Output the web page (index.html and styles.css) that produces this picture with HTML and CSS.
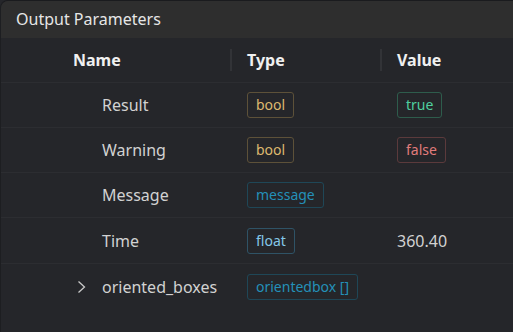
FILE: index.html
```html
<!DOCTYPE html>
<html lang="en">
<head>
<meta charset="utf-8">
<title>Output Parameters</title>
<link rel="stylesheet" href="styles.css">
</head>
<body>
<div class="panel">
  <div class="panel-title">Output Parameters</div>
  <div class="table">
    <div class="row head">
      <div class="cell name-h">Name</div>
      <div class="cell col-h"><span class="divider"></span>Type</div>
      <div class="cell col-h"><span class="divider"></span>Value</div>
    </div>
    <div class="row">
      <div class="cell name"><span class="chev-slot"></span>Result</div>
      <div class="cell type"><span class="badge b-bool">bool</span></div>
      <div class="cell value"><span class="badge v-true">true</span></div>
    </div>
    <div class="row">
      <div class="cell name"><span class="chev-slot"></span>Warning</div>
      <div class="cell type"><span class="badge b-bool">bool</span></div>
      <div class="cell value"><span class="badge v-false">false</span></div>
    </div>
    <div class="row">
      <div class="cell name"><span class="chev-slot"></span>Message</div>
      <div class="cell type"><span class="badge b-msg">message</span></div>
      <div class="cell value"></div>
    </div>
    <div class="row tall">
      <div class="cell name"><span class="chev-slot"></span>Time</div>
      <div class="cell type"><span class="badge b-float">float</span></div>
      <div class="cell value">360.40</div>
    </div>
    <div class="row last">
      <div class="cell name"><span class="chev-slot"><svg class="chev" width="9" height="14" viewBox="0 0 9 14"><path d="M1.5 1.5 L7.5 7 L1.5 12.5" fill="none" stroke="#c9c9c9" stroke-width="1.3"/></svg></span>oriented_boxes</div>
      <div class="cell type"><span class="badge b-msg">orientedbox []</span></div>
      <div class="cell value"></div>
    </div>
  </div>
</div>
</body>
</html>
```
FILE: styles.css
```css
html, body {
  margin: 0;
  padding: 0;
  background: #25262a;
  height: 332px;
  overflow: hidden;
}
body {
  font-family: "Noto Sans", "Open Sans", sans-serif;
  color: #d2d2d2;
}
.panel {
  height: 332px;
  box-sizing: border-box;
  border-top: 1px solid #1a1b1e;
  border-left: 1px solid #1d1e21;
  border-top-left-radius: 8px;
  background: #25262a;
  overflow: hidden;
}
.panel-title {
  height: 37px;
  background: #2e2e2e;
  padding-left: 15px;
  font-size: 16px;
  line-height: 37px;
  color: #e6e6e6;
}
.table {
  display: flex;
  flex-direction: column;
}
.row {
  display: grid;
  grid-template-columns: 229px 150px 1fr;
  height: 45px;
  border-bottom: 1px solid #2c2d31;
  box-sizing: border-box;
  align-items: center;
}
.row.tall {
  height: 46px;
}
.row.last {
  border-bottom: none;
}
.cell {
  display: flex;
  align-items: center;
  font-size: 16px;
}
.name-h {
  padding-left: 72px;
  font-weight: 700;
  color: #f0f0f0;
}
.col-h {
  font-weight: 700;
  color: #f0f0f0;
}
.divider {
  width: 2px;
  height: 22px;
  background: #323337;
  margin-right: 15px;
}
.name {
  padding-left: 76px;
}
.chev-slot {
  width: 25px;
  display: flex;
  align-items: center;
}
.chev {
  display: block;
}
.type, .value {
  padding-left: 17px;
}
.badge {
  display: inline-block;
  height: 26px;
  box-sizing: border-box;
  padding: 0 8px;
  border: 1px solid;
  border-radius: 3px;
  font-size: 14px;
  line-height: 23px;
}
.b-bool { color: #ddb86f; border-color: #5d5139; }
.v-true { color: #4fcf9f; border-color: #2e5c4c; }
.v-false { color: #e07c7c; border-color: #5b3a3c; }
.b-msg { color: #2490b8; border-color: #1f4757; }
.b-float { color: #84c6e8; border-color: #2f5366; }
```
